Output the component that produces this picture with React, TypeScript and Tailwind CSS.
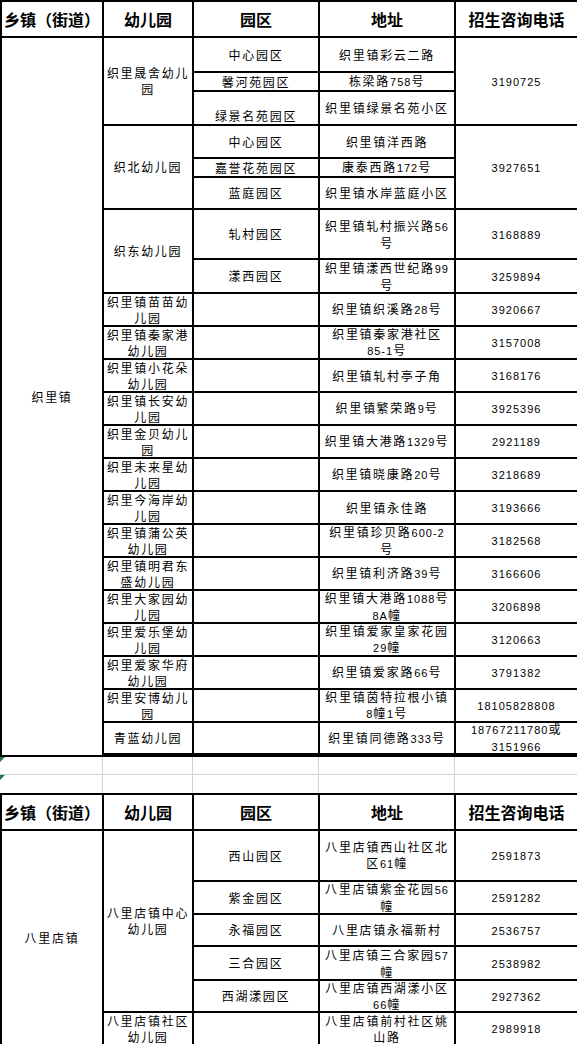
import clsx from "clsx";

const ASCII = /^[0-9A-Za-z\-]+$/;

function Txt({ s }: { s: string }) {
  const parts = s.split(/([0-9A-Za-z\-]+)/).filter(Boolean);
  return (
    <>
      {parts.map((p, i) =>
        ASCII.test(p) ? (
          <span key={i} className="font-['Liberation_Sans',sans-serif] text-[11px] tracking-[1px]">
            {p}
          </span>
        ) : (
          <span key={i}>{p}</span>
        )
      )}
    </>
  );
}

function Cell({ lines = [], className = "" }: { lines?: string[]; className?: string }) {
  return (
    <div
      className={clsx(
        "flex flex-col items-center justify-center bg-white text-center text-[12px] leading-[16px] tracking-[1.7px] text-black",
        className
      )}
    >
      {lines.map((l, i) => (
        <div key={i} className="whitespace-nowrap">
          <Txt s={l} />
        </div>
      ))}
    </div>
  );
}

function Head() {
  return (
    <>
      {["乡镇（街道）", "幼儿园", "园区", "地址", "招生咨询电话"].map((h) => (
        <div
          key={h}
          className="flex items-center justify-center whitespace-nowrap bg-white text-[16px] font-bold text-black"
        >
          {h}
        </div>
      ))}
    </>
  );
}

/** single-campus rows, 园区 column left blank */
const singles: [string[], string[], string[]][] = [
  [["织里镇苗苗幼", "儿园"], ["织里镇织溪路28号"], ["3920667"]],
  [["织里镇秦家港", "幼儿园"], ["织里镇秦家港社区", "85-1号"], ["3157008"]],
  [["织里镇小花朵", "幼儿园"], ["织里镇轧村亭子角"], ["3168176"]],
  [["织里镇长安幼", "儿园"], ["织里镇繁荣路9号"], ["3925396"]],
  [["织里金贝幼儿", "园"], ["织里镇大港路1329号"], ["2921189"]],
  [["织里未来星幼", "儿园"], ["织里镇晓康路20号"], ["3218689"]],
  [["织里今海岸幼", "儿园"], ["织里镇永佳路"], ["3193666"]],
  [["织里镇蒲公英", "幼儿园"], ["织里镇珍贝路600-2", "号"], ["3182568"]],
  [["织里镇明君东", "盛幼儿园"], ["织里镇利济路39号"], ["3166606"]],
  [["织里大家园幼", "儿园"], ["织里镇大港路1088号", "8A幢"], ["3206898"]],
  [["织里爱乐堡幼", "儿园"], ["织里镇爱家皇家花园", "29幢"], ["3120663"]],
  [["织里爱家华府", "幼儿园"], ["织里镇爱家路66号"], ["3791382"]],
  [["织里安博幼儿", "园"], ["织里镇茵特拉根小镇", "8幢1号"], ["18105828808"]],
  [["青蓝幼儿园"], ["织里镇同德路333号"], ["18767211780或", "3151966"]],
];

const bali: [string[], string[], string[]][] = [
  [["西山园区"], ["八里店镇西山社区北", "区61幢"], ["2591873"]],
  [["紫金园区"], ["八里店镇紫金花园56", "幢"], ["2591282"]],
  [["永福园区"], ["八里店镇永福新村"], ["2536757"]],
  [["三合园区"], ["八里店镇三合家园57", "幢"], ["2538982"]],
  [["西湖漾园区"], ["八里店镇西湖漾小区", "66幢"], ["2927362"]],
];

export default function App() {
  return (
    <div className="w-[577px] overflow-hidden bg-white font-['Noto_Sans_CJK_SC',sans-serif]">
      {/* 织里镇 */}
      <div className="grid grid-cols-[100px_88px_124px_134px_121px] grid-rows-[34px_33px_17px_32px_31px_17px_30px_48px_32px_repeat(13,31px)_30px] gap-[2px] bg-black pt-[2px] pb-[2px] pl-[2px]">
        <Head />

        <Cell className="row-span-23" lines={["织里镇"]} />
        <Cell className="row-span-3" lines={["织里晟舍幼儿", "园"]} />
        <Cell lines={["中心园区"]} />
        <Cell lines={["织里镇彩云二路"]} />
        <Cell className="row-span-3" lines={["3190725"]} />
        <Cell lines={["馨河苑园区"]} />
        <Cell lines={["栋梁路758号"]} />
        <Cell className="justify-end" lines={["绿景名苑园区"]} />
        <Cell lines={["织里镇绿景名苑小区"]} />

        <Cell className="row-span-3" lines={["织北幼儿园"]} />
        <Cell lines={["中心园区"]} />
        <Cell lines={["织里镇洋西路"]} />
        <Cell className="row-span-3" lines={["3927651"]} />
        <Cell lines={["嘉誉花苑园区"]} />
        <Cell lines={["康泰西路172号"]} />
        <Cell lines={["蓝庭园区"]} />
        <Cell lines={["织里镇水岸蓝庭小区"]} />

        <Cell className="row-span-2" lines={["织东幼儿园"]} />
        <Cell lines={["轧村园区"]} />
        <Cell lines={["织里镇轧村振兴路56", "号"]} />
        <Cell lines={["3168889"]} />
        <Cell lines={["漾西园区"]} />
        <Cell lines={["织里镇漾西世纪路99", "号"]} />
        <Cell lines={["3259894"]} />

        {singles.map(([name, addr, tel]) => (
          <div key={name.join("")} className="contents">
            <Cell lines={name} />
            <Cell />
            <Cell lines={addr} />
            <Cell lines={tel} />
          </div>
        ))}
      </div>

      {/* empty spreadsheet rows */}
      <div className="grid grid-cols-[103px_90px_126px_136px_122px] grid-rows-[18px_18px]">
        {[0, 1].map((r) =>
          [0, 1, 2, 3, 4].map((c) => (
            <div
              key={`${r}-${c}`}
              className={clsx(
                "border-[#d0d3da]",
                c < 4 && "border-r",
                r === 0 && "border-b"
              )}
            >
              {c === 0 && (
                <div className="h-0 w-0 border-t-[5px] border-r-[5px] border-t-[#1f7a3f] border-r-transparent" />
              )}
            </div>
          ))
        )}
      </div>

      {/* 八里店镇 */}
      <div className="grid grid-cols-[100px_88px_124px_134px_121px] grid-rows-[34px_49px_31px_30px_32px_30px_31px] gap-[2px] bg-black pt-[2px] pb-[2px] pl-[2px]">
        <Head />

        <Cell className="row-span-6" lines={["八里店镇"]} />
        <Cell className="row-span-5" lines={["八里店镇中心", "幼儿园"]} />
        {bali.map(([zone, addr, tel]) => (
          <div key={zone.join("")} className="contents">
            <Cell lines={zone} />
            <Cell lines={addr} />
            <Cell lines={tel} />
          </div>
        ))}

        <Cell lines={["八里店镇社区", "幼儿园"]} />
        <Cell />
        <Cell lines={["八里店镇前村社区姚", "山路"]} />
        <Cell lines={["2989918"]} />
      </div>
    </div>
  );
}
